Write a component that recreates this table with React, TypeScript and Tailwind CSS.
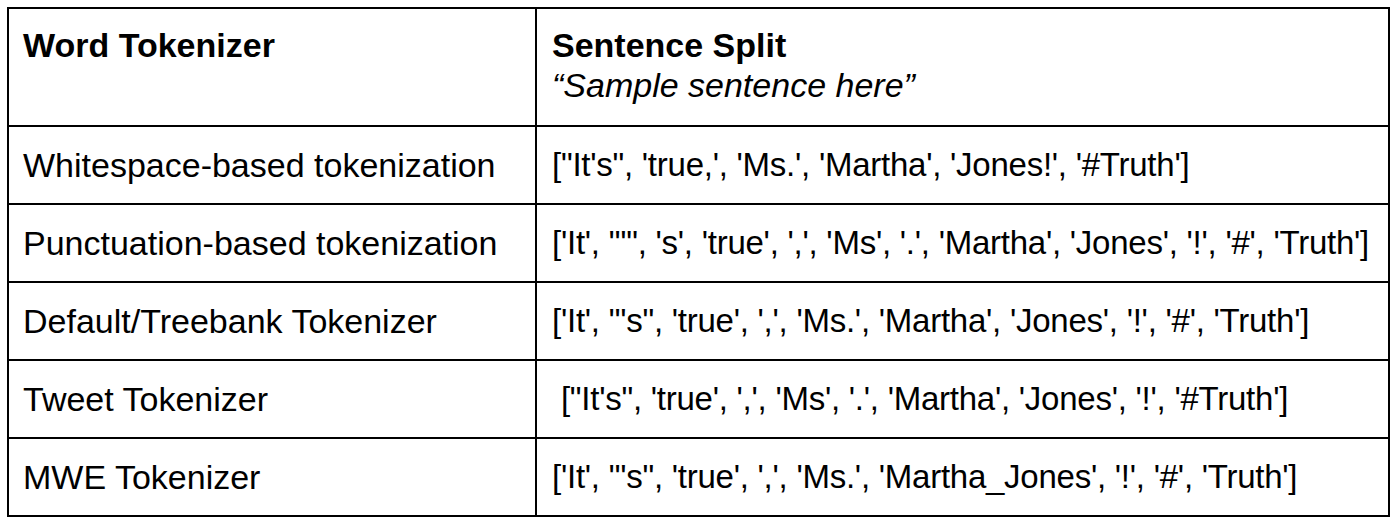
export default function App() {
  const rows = [
    { name: "Whitespace-based tokenization", split: `["It's", 'true,', 'Ms.', 'Martha', 'Jones!', '#Truth']` },
    { name: "Punctuation-based tokenization", split: `['It', "'", 's', 'true', ',', 'Ms', '.', 'Martha', 'Jones', '!', '#', 'Truth']` },
    { name: "Default/Treebank Tokenizer", split: `['It', "'s", 'true', ',', 'Ms.', 'Martha', 'Jones', '!', '#', 'Truth']` },
    { name: "Tweet Tokenizer", split: ` ["It's", 'true', ',', 'Ms', '.', 'Martha', 'Jones', '!', '#Truth']` },
    { name: "MWE Tokenizer", split: `['It', "'s", 'true', ',', 'Ms.', 'Martha_Jones', '!', '#', 'Truth']` },
  ];

  return (
    <div className="w-[1400px] h-[525px] bg-white pl-[7px] pt-[7px] text-black font-['Liberation_Sans',Arial,sans-serif]">
      <table className="w-[1383px] border-collapse border-2 border-black table-fixed">
        <colgroup>
          <col className="w-[528px]" />
          <col />
        </colgroup>
        <tbody>
          {/* header */}
          <tr className="h-[118px]">
            <td className="border-2 border-black align-top px-[14px] pt-[16px] text-[34px] leading-[40px] font-bold">
              Word Tokenizer
            </td>
            <td className="border-2 border-black align-top px-[15px] pt-[16px] text-[34px] leading-[40px]">
              <div className="font-bold">Sentence Split</div>
              <div className="italic">“Sample sentence here”</div>
            </td>
          </tr>

          {rows.map((r) => (
            <tr key={r.name} className="h-[78px]">
              <td className="border-2 border-black align-middle px-[14px] text-[34px] leading-[38px]">
                {r.name}
              </td>
              <td className="border-2 border-black align-middle px-[15px] text-[33px] leading-[38px] tracking-[-0.25px] whitespace-pre">
                {r.split}
              </td>
            </tr>
          ))}
        </tbody>
      </table>
    </div>
  );
}
